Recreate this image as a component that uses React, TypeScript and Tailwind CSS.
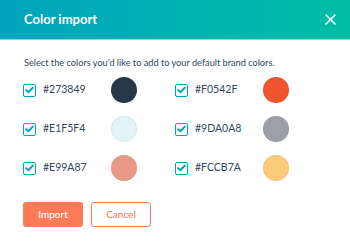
const colors = [
    { hex: "#273849", bg: "bg-[#273849]" },
    { hex: "#F0542F", bg: "bg-[#f0542f]" },
    { hex: "#E1F5F4", bg: "bg-[#e1f5f4]" },
    { hex: "#9DA0A8", bg: "bg-[#9da0a8]" },
    { hex: "#E99A87", bg: "bg-[#e99a87]" },
    { hex: "#FCCB7A", bg: "bg-[#fccb7a]" },
];

function Checkbox() {
    return (
        <span className="flex h-[13px] w-[13px] items-center justify-center rounded-[2px] border-[1.5px] border-[#00a4bd] bg-white">
            <svg width="9" height="8" viewBox="0 0 9 8">
                <path
                    d="M1.2 4.2 L3.4 6.2 L7.8 1.6"
                    fill="none"
                    stroke="#00a4bd"
                    strokeWidth="2"
                    strokeLinecap="round"
                    strokeLinejoin="round"
                />
            </svg>
        </span>
    );
}

export default function App() {
    return (
        <div className="h-[241px] w-[350px] overflow-hidden bg-white font-['Lato',sans-serif] text-[#33475b]">
            <header className="flex h-10 items-center justify-between border-b border-[#8fd6df] bg-gradient-to-r from-[#00a4bd] to-[#00bda5] pl-6 pr-[14px]">
                <h1 className="text-[13px] font-bold text-white">Color import</h1>
                <svg width="11" height="11" viewBox="0 0 11 11">
                    <path
                        d="M1 1 L10 10 M10 1 L1 10"
                        stroke="white"
                        strokeWidth="1.6"
                        strokeLinecap="round"
                    />
                </svg>
            </header>
            <div className="px-6 pt-4">
                <p className="text-[9.2px] leading-[14px]">
                    Select the colors you'd like to add to your default brand
                    colors.
                </p>
                <div className="mt-[7px] grid grid-cols-[152px_152px] gap-y-[13px] -ml-px">
                    {colors.map((c) => (
                        <div key={c.hex} className="flex items-center">
                            <Checkbox />
                            <span className="ml-[7px] w-[68px] text-[10.5px]">
                                {c.hex}
                            </span>
                            <span
                                className={`h-[26px] w-[26px] rounded-full border border-black/5 ${c.bg}`}
                            />
                        </div>
                    ))}
                </div>
                <div className="mt-[21px] -ml-px flex gap-2">
                    <button className="h-[25px] w-[60px] rounded-[3px] bg-[#ff7a59] text-[10px] font-medium text-white">
                        Import
                    </button>
                    <button className="h-[25px] w-[60px] rounded-[3px] border border-[#ff7a59] bg-white text-[10px] font-medium text-[#ff7a59]">
                        Cancel
                    </button>
                </div>
            </div>
        </div>
    );
}
